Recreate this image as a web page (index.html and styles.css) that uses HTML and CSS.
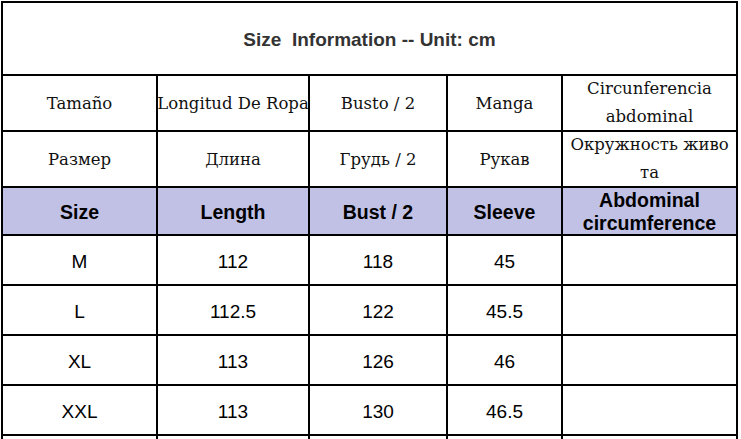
FILE: index.html
```html
<!DOCTYPE html>
<html lang="es">
<head>
<meta charset="utf-8">
<title>Size Information</title>
<link rel="stylesheet" href="styles.css">
</head>
<body>
<div class="sheet">
  <div class="size-table">
    <div class="cell title">Size  Information -- Unit: cm</div>

    <div class="cell serif">Tamaño</div>
    <div class="cell serif nowrap">Longitud De Ropa</div>
    <div class="cell serif">Busto / 2</div>
    <div class="cell serif">Manga</div>
    <div class="cell serif two">Circunferencia<br>abdominal</div>

    <div class="cell serif">Размер</div>
    <div class="cell serif">Длина</div>
    <div class="cell serif">Грудь / 2</div>
    <div class="cell serif">Рукав</div>
    <div class="cell serif two">Окружность живо<br>та</div>

    <div class="cell head">Size</div>
    <div class="cell head">Length</div>
    <div class="cell head">Bust / 2</div>
    <div class="cell head">Sleeve</div>
    <div class="cell head two">Abdominal<br>circumference</div>

    <div class="cell data">M</div>
    <div class="cell data">112</div>
    <div class="cell data">118</div>
    <div class="cell data">45</div>
    <div class="cell data"></div>

    <div class="cell data">L</div>
    <div class="cell data">112.5</div>
    <div class="cell data">122</div>
    <div class="cell data">45.5</div>
    <div class="cell data"></div>

    <div class="cell data">XL</div>
    <div class="cell data">113</div>
    <div class="cell data">126</div>
    <div class="cell data">46</div>
    <div class="cell data"></div>

    <div class="cell data">XXL</div>
    <div class="cell data">113</div>
    <div class="cell data">130</div>
    <div class="cell data">46.5</div>
    <div class="cell data"></div>

    <div class="cell data"></div>
    <div class="cell data"></div>
    <div class="cell data"></div>
    <div class="cell data"></div>
    <div class="cell data"></div>
  </div>
</div>
</body>
</html>
```

FILE: styles.css
```css
html, body {
  margin: 0;
  padding: 0;
  background: #ffffff;
  overflow: hidden;
  height: 439px;
}

.sheet {
  padding: 1px 0 0 1px;
}

.size-table {
  display: grid;
  grid-template-columns: 155px 152px 138px 115px 175px;
  grid-template-rows: 73px 56px 56px 48px 50px 50px 50px 50px 50px;
  width: max-content;
  border-left: 2px solid #000;
  border-top: 2px solid #000;
  font-family: "Liberation Sans", Arial, sans-serif;
  color: #000;
}

.cell {
  box-sizing: border-box;
  border-right: 2px solid #000;
  border-bottom: 2px solid #000;
  display: flex;
  align-items: center;
  justify-content: center;
  text-align: center;
  overflow: visible;
}

.title {
  grid-column: 1 / -1;
  white-space: pre;
  font-weight: bold;
  font-size: 19px;
  color: #333;
  padding-top: 3px;
}

.serif {
  font-family: "DejaVu Serif", "Liberation Serif", serif;
  font-size: 16.5px;
  color: #111;
}

.serif.two {
  line-height: 28px;
}

.nowrap {
  white-space: nowrap;
}

.head {
  background: #c1c1e6;
  font-weight: bold;
  font-size: 19.5px;
  padding-top: 3px;
}

.head.two {
  line-height: 23px;
  padding-top: 1px;
}

.data {
  font-size: 19px;
  padding-top: 4px;
}
```
